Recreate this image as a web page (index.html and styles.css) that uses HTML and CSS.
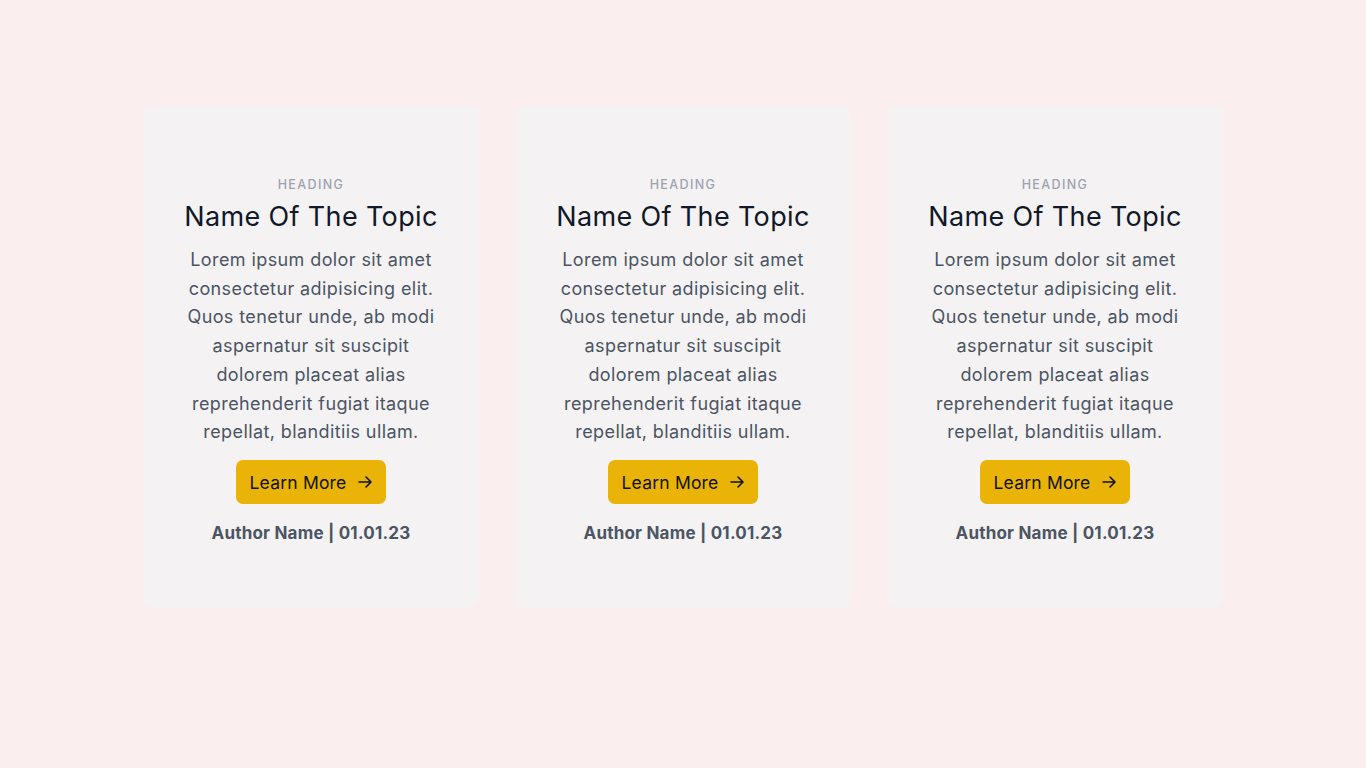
FILE: index.html
```html
<!DOCTYPE html>
<html lang="en">
<head>
<meta charset="utf-8">
<title>Cards</title>
<link rel="stylesheet" href="styles.css">
</head>
<body>
<main class="cards">
  <article class="card">
    <p class="eyebrow">HEADING</p>
    <h2 class="title">Name Of The Topic</h2>
    <p class="text">Lorem ipsum dolor sit amet<br>consectetur adipisicing elit.<br>Quos tenetur unde, ab modi<br>aspernatur sit suscipit<br>dolorem placeat alias<br>reprehenderit fugiat itaque<br>repellat, blanditiis ullam.</p>
    <a class="btn" href="#">Learn More <svg class="arrow" viewBox="0 0 14 14" width="14" height="14"><path d="M1 7h12M8 2l5 5-5 5" fill="none" stroke="currentColor" stroke-width="1.6" stroke-linecap="round" stroke-linejoin="round"/></svg></a>
    <p class="author">Author Name | 01.01.23</p>
  </article>
  <article class="card">
    <p class="eyebrow">HEADING</p>
    <h2 class="title">Name Of The Topic</h2>
    <p class="text">Lorem ipsum dolor sit amet<br>consectetur adipisicing elit.<br>Quos tenetur unde, ab modi<br>aspernatur sit suscipit<br>dolorem placeat alias<br>reprehenderit fugiat itaque<br>repellat, blanditiis ullam.</p>
    <a class="btn" href="#">Learn More <svg class="arrow" viewBox="0 0 14 14" width="14" height="14"><path d="M1 7h12M8 2l5 5-5 5" fill="none" stroke="currentColor" stroke-width="1.6" stroke-linecap="round" stroke-linejoin="round"/></svg></a>
    <p class="author">Author Name | 01.01.23</p>
  </article>
  <article class="card">
    <p class="eyebrow">HEADING</p>
    <h2 class="title">Name Of The Topic</h2>
    <p class="text">Lorem ipsum dolor sit amet<br>consectetur adipisicing elit.<br>Quos tenetur unde, ab modi<br>aspernatur sit suscipit<br>dolorem placeat alias<br>reprehenderit fugiat itaque<br>repellat, blanditiis ullam.</p>
    <a class="btn" href="#">Learn More <svg class="arrow" viewBox="0 0 14 14" width="14" height="14"><path d="M1 7h12M8 2l5 5-5 5" fill="none" stroke="currentColor" stroke-width="1.6" stroke-linecap="round" stroke-linejoin="round"/></svg></a>
    <p class="author">Author Name | 01.01.23</p>
  </article>
</main>
</body>
</html>
```
FILE: styles.css
```css
* { box-sizing: border-box; }
html, body { margin: 0; padding: 0; }
body {
  background: #faefee;
  font-family: Inter, "Noto Sans", sans-serif;
  color: #4b5563;
}
.cards {
  display: flex;
  justify-content: center;
  gap: 36px;
  padding-top: 106px;
}
.card {
  width: 336px;
  height: 502px;
  background: #f5f2f3;
  border-radius: 10px;
  display: flex;
  flex-direction: column;
  align-items: center;
  justify-content: center;
  text-align: center;
  padding: 7px 20px 0;
}
.eyebrow {
  margin: 0;
  font-size: 12.5px;
  font-weight: 500;
  letter-spacing: 1.4px;
  color: #9ca3af;
  line-height: 18px;
}
.title {
  margin: 6px 0 0;
  font-size: 27px;
  font-weight: 400;
  color: #111827;
  line-height: 34px;
  letter-spacing: 0.35px;
}
.text {
  margin: 12px 0 0;
  font-size: 18px;
  line-height: 28.8px;
  letter-spacing: 0.4px;
  color: #4b5563;
}
.btn {
  margin-top: 13px;
  display: inline-flex;
  align-items: center;
  gap: 11px;
  height: 44px;
  padding: 0 14px 0 13px;
  background: #eab308;
  color: #111;
  text-decoration: none;
  font-size: 17.5px;
  letter-spacing: 0.2px;
  border-radius: 7px;
}
.arrow { display: block; }
.author {
  margin: 17px 0 0;
  font-size: 17px;
  font-weight: 700;
  letter-spacing: 0.2px;
  color: #4b5563;
  line-height: 24px;
}
```
